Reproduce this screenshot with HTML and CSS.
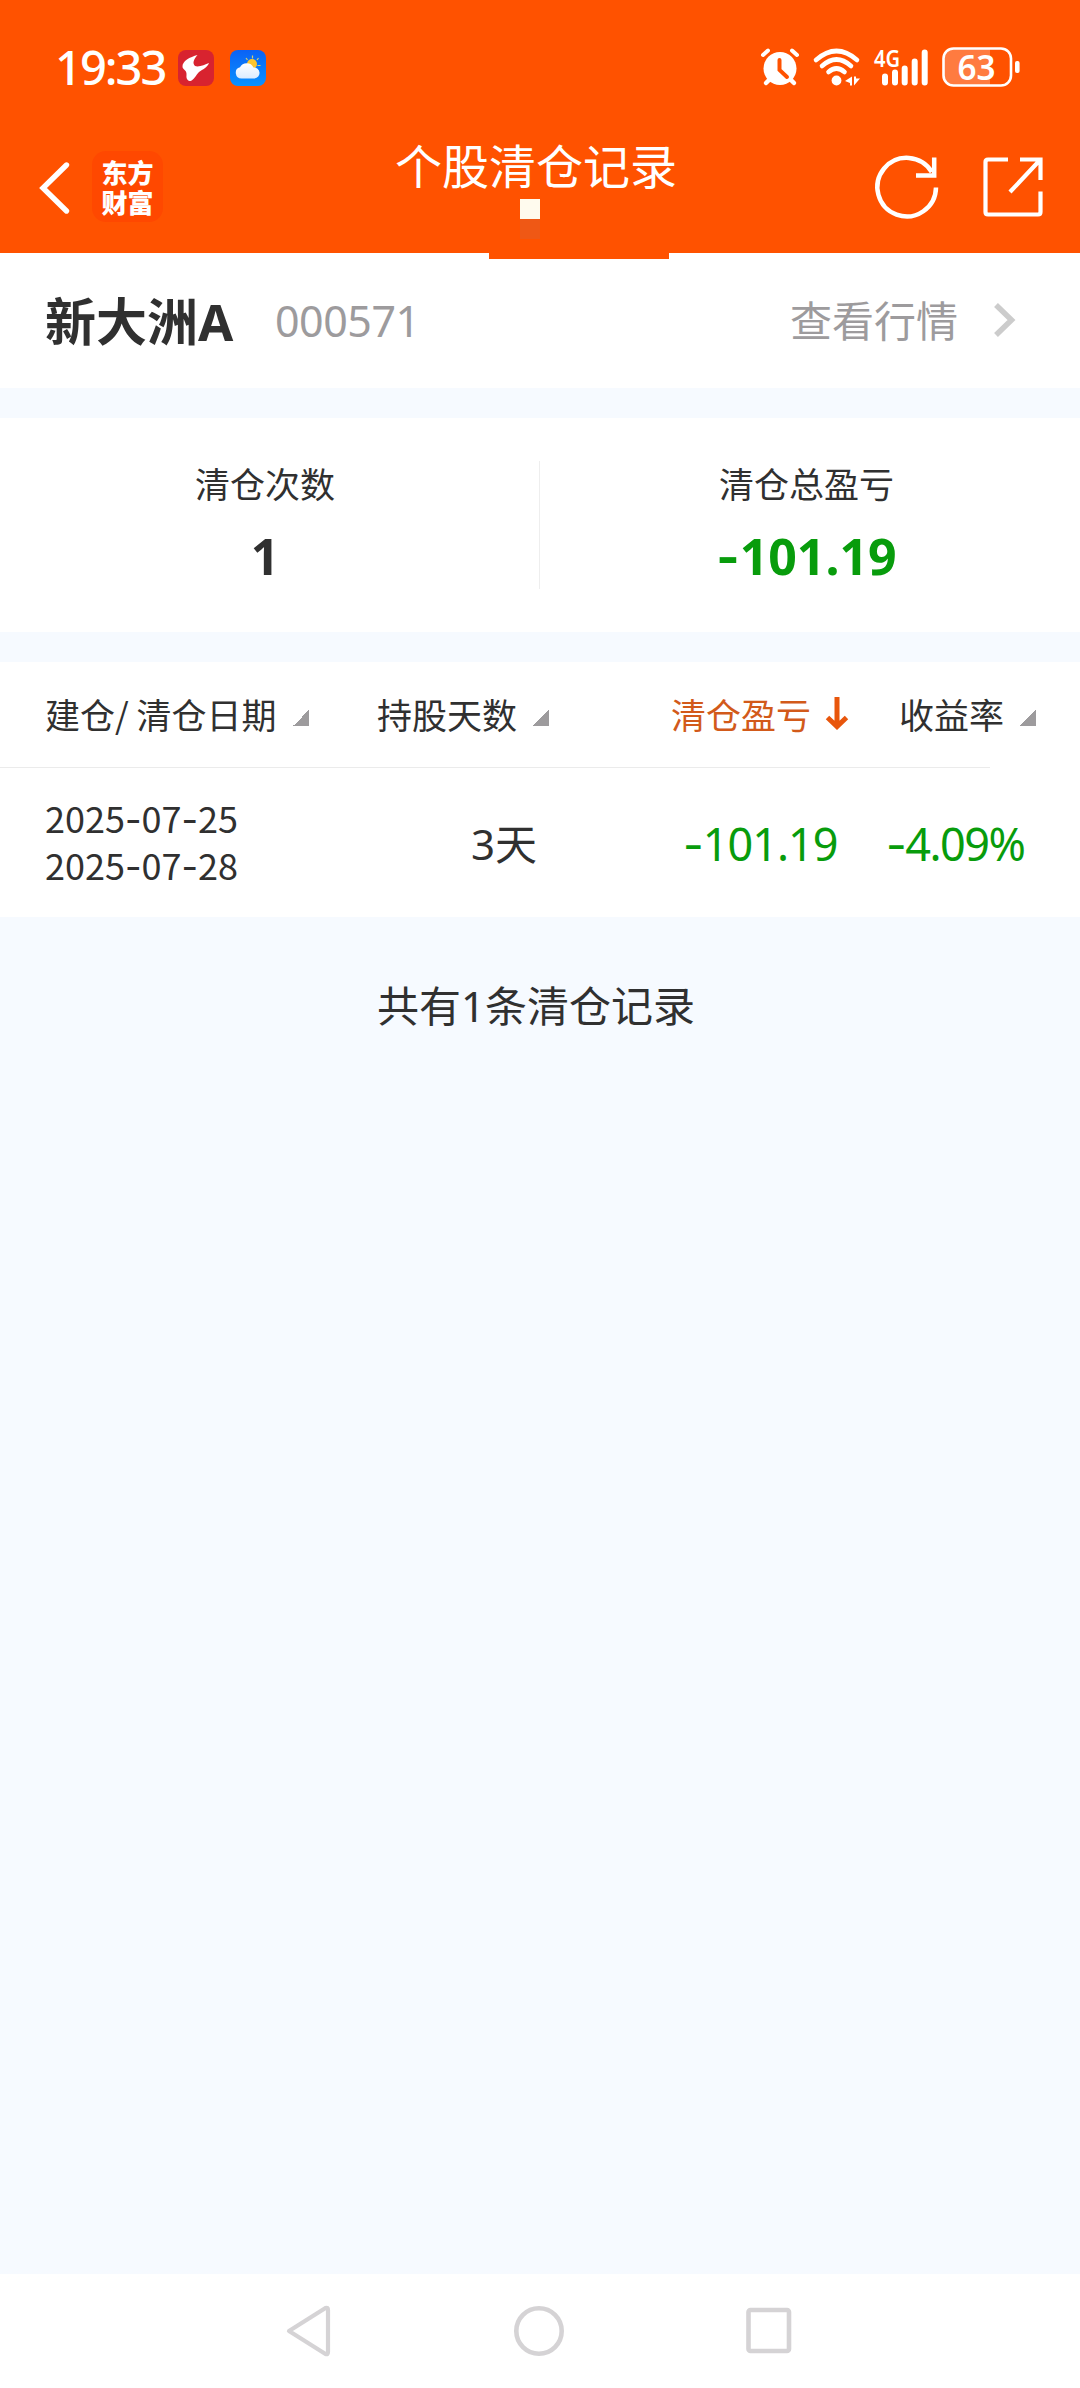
FILE: index.html
```html
<!DOCTYPE html>
<html lang="zh-CN">
<head>
    <meta charset="UTF-8">
    <meta name="viewport" content="width=device-width, initial-scale=1.0">
    <title>个股清仓记录</title>
    <link rel="stylesheet" href="styles.css">
</head>
<body>
    <div class="header">
        <!-- 状态栏 -->
        <div class="status-bar">
            <span class="time">19:33</span>
            <svg class="app-icon" width="36" height="36" viewBox="0 0 36 36">
                <rect width="36" height="36" rx="8" fill="#d8232f"/>
                <path d="M19.500 5C12 7 4 11 4.500 17C5 20 9 20 8.500 25C8 29 10 31 12.500 31C16 30 18 25 21 22C25 19 29 18 31 13C27 14.500 21 17.500 17 16C14 13 16 9 19.500 5Z" fill="#fff"/>
            </svg>
            <svg class="app-icon" width="36" height="36" viewBox="0 0 36 36">
                <defs>
                    <linearGradient id="sky" x1="0" y1="0" x2="0" y2="1">
                        <stop offset="0" stop-color="#0a62f5"/>
                        <stop offset="1" stop-color="#0a92ff"/>
                    </linearGradient>
                    <linearGradient id="cloud" x1="0" y1="0" x2="0" y2="1">
                        <stop offset="0" stop-color="#fff"/>
                        <stop offset="1" stop-color="#dcecff"/>
                    </linearGradient>
                </defs>
                <rect width="36" height="36" rx="8" fill="url(#sky)"/>
                <path d="M22.500 5.500v3M16 8l1.500 2M28.500 8L27 10M27.500 15.500h3M26.500 20l2 1.500" stroke="#d9cf70" stroke-width="1.200"/>
                <circle cx="22" cy="14" r="5" fill="#ffc52e"/>
                <path d="M11.500 28.500A5.700 5.700 0 0 1 10 17.300A7.500 7.500 0 0 1 23.500 17.500A5.500 5.500 0 0 1 24.500 28.500Z" fill="url(#cloud)"/>
            </svg>
            <div class="status-icons">
                <svg class="alarm" width="40" height="40" viewBox="0 0 40 40">
                    <circle cx="20" cy="21.500" r="16.500" fill="#fff"/>
                    <path d="M9 33l-3 3M31 33l3 3" stroke="#fff" stroke-width="4.500" stroke-linecap="round"/>
                    <path d="M3 8l5-4.500M32 3.500L37 8" stroke="#fff" stroke-width="4" stroke-linecap="round"/>
                    <path d="M19.500 13v10l7.500 7" stroke="#ff5200" stroke-width="4" stroke-linecap="round" fill="none"/>
                </svg>
                <svg class="wifi" width="48" height="40" viewBox="0 0 48 40">
                    <g fill="none" stroke="#fff" stroke-width="4.600" stroke-linecap="round">
                        <path d="M3 13Q23.500-5 44 13"/>
                        <path d="M9 19Q23.500 6 38 19"/>
                        <path d="M15.500 25Q23.500 18 31.500 25"/>
                    </g>
                    <circle cx="23.500" cy="33.500" r="4.900" fill="#fff"/>
                    <path d="M39 29.500v9h-2v-2.500l-5-2zM41 29.500v9l6-7h-4v-2z" fill="#fff"/>
                </svg>
                <svg class="signal" width="56" height="40" viewBox="0 0 56 40">
                    <text class="network" x="0" y="20" textLength="26" lengthAdjust="spacingAndGlyphs">4G</text>
                    <path d="M11 29.500v6M21 25.500v10M30.700 21.500v14M40.700 14.500v21M50.700 5.500v30" stroke="#fff" stroke-width="6" stroke-linecap="round"/>
                </svg>
                <svg class="battery" width="80" height="40" viewBox="0 0 80 40">
                    <path d="M11 2H48V38H11Q2 38 2 29V11Q2 2 11 2Z" fill="#ff7b40"/>
                    <rect x="1.500" y="1.500" width="67.500" height="37" rx="10" fill="none" stroke="#fff" stroke-width="2.600"/>
                    <rect x="73" y="14" width="4.600" height="12" rx="2" fill="#fff"/>
                    <text class="level" x="15.500" y="32.500" textLength="38" lengthAdjust="spacingAndGlyphs">63</text>
                </svg>
            </div>
        </div>

        <!-- 标题栏 -->
        <div class="title-bar">
            <svg class="back" width="32" height="54" viewBox="0 0 32 54">
                <path d="M28.500 4L5 27L28.500 50" fill="none" stroke="#fff" stroke-width="5.400" stroke-linecap="round"/>
            </svg>
            <div class="logo">
                <div>东方</div>
                <div>财富</div>
            </div>
            <h1>个股清仓记录</h1>
            <svg class="refresh" width="64" height="64" viewBox="0 0 64 64">
                <path d="M60 32.500A29.300 29.300 0 1 1 55.800 17" fill="none" stroke="#fff" stroke-width="4.500"/>
                <path d="M58.200 2.500V20.500H40" fill="none" stroke="#fff" stroke-width="4.500"/>
            </svg>
            <svg class="share" width="62" height="62" viewBox="0 0 62 62">
                <path d="M26 3.500H6Q3.500 3.500 3.500 6V56Q3.500 58.500 6 58.500H56Q58.500 58.500 58.500 56V35.500M38 3.500H58.500V24M58 4L28 36" fill="none" stroke="#fff" stroke-width="4.200"/>
            </svg>
        </div>
        <div class="pixel"></div>
        <div class="pixel-shade"></div>
        <div class="tab-line"></div>
    </div>

    <!-- 股票名称 -->
    <div class="stock">
        <div class="stock-name">新大洲<span>A</span></div>
        <div class="stock-code">000571</div>
        <div class="stock-link">查看行情</div>
        <svg width="24" height="36" viewBox="0 0 24 36">
            <path d="M3 3L18.500 18L3 33" fill="none" stroke="#ccc" stroke-width="5.500"/>
        </svg>
    </div>

    <!-- 汇总 -->
    <div class="summary">
        <div class="summary-item count">
            <div class="label">清仓次数</div>
            <div class="value">1</div>
        </div>
        <div class="summary-item profit">
            <div class="label">清仓总盈亏</div>
            <div class="value green"><span class="dash">-</span>101.19</div>
        </div>
    </div>

    <!-- 清仓记录列表 -->
    <div class="records">
        <div class="records-head">
            <div class="col-date">建仓/ 清仓日期<i class="sort"></i></div>
            <div class="col-days">持股天数<i class="sort"></i></div>
            <div class="col-profit active">清仓盈亏<svg width="24" height="34" viewBox="0 0 24 34">
                <path d="M12 1V30M2.500 21.500L12 30.500L21.500 21.500" fill="none" stroke="#e8560c" stroke-width="5"/>
            </svg></div>
            <div class="col-rate">收益率<i class="sort"></i></div>
        </div>
        <div class="record">
            <div class="dates">
                <div>2025<span class="dash">-</span>07<span class="dash">-</span>25</div>
                <div>2025<span class="dash">-</span>07<span class="dash">-</span>28</div>
            </div>
            <div class="days"><span>3</span>天</div>
            <div class="amount green"><span class="dash">-</span>101.19</div>
            <div class="rate green"><span class="dash">-</span>4.09%</div>
        </div>
    </div>

    <p class="total">共有<span>1</span>条清仓记录</p>

    <!-- 系统导航 -->
    <div class="nav-bar">
        <svg width="50" height="54" viewBox="0 0 50 54">
            <path d="M5 27L41.500 4Q44 3 44 6V48Q44 51 41.500 50Z" fill="none" stroke="#d5d3d5" stroke-width="4.200" stroke-linejoin="round"/>
        </svg>
        <svg width="54" height="54" viewBox="0 0 54 54">
            <circle cx="27" cy="27" r="22.700" fill="none" stroke="#d5d3d5" stroke-width="4.600"/>
        </svg>
        <svg width="50" height="54" viewBox="0 0 50 54">
            <rect x="4.500" y="6" width="40.500" height="41" rx="2" fill="none" stroke="#d5d3d5" stroke-width="4.600"/>
        </svg>
    </div>
</body>
</html>
```
FILE: styles.css
```css
* {
    box-sizing: border-box;
}
body {
    margin: 0;
    width: 1080px;
    height: 2388px;
    display: flex;
    flex-direction: column;
    background-color: #f6faff;
    color: #303030;
    font-family: "Noto Sans CJK SC", sans-serif;
}
svg {
    display: block;
    flex-shrink: 0;
    overflow: visible;
}
.header {
    position: relative;
    height: 253px;
    background-color: #ff5200;
    color: #fff;
}
.status-bar {
    display: flex;
    align-items: center;
    height: 134px;
    padding-left: 55px;
}
.time {
    width: 123px;
    font-family: "Noto Sans", sans-serif;
    font-size: 47px;
    font-weight: 500;
    letter-spacing: -2px;
    white-space: nowrap;
}
.app-icon {
    margin-top: 2px;
    margin-right: 16px;
}
.status-icons {
    display: flex;
    margin-left: auto;
    padding-right: 58px;
}
.wifi {
    margin-left: 13px;
}
.signal {
    margin-left: 13px;
}
.battery {
    margin-left: 12px;
}
.network {
    font: 600 24px "Noto Sans", sans-serif;
    fill: #fff;
}
.level {
    font: 600 35px "Noto Sans", sans-serif;
    fill: #fff;
}
.title-bar {
    display: flex;
    align-items: flex-start;
}
.back {
    margin: 27px 0 0 38px;
}
.logo {
    width: 71px;
    height: 71px;
    margin: 17px 0 0 22px;
    padding-top: 8px;
    border-radius: 14px;
    background-color: #ff4800;
    font-family: "Liberation Sans", "Noto Sans CJK SC", sans-serif;
    font-size: 26px;
    font-weight: 900;
    text-align: center;
}
.logo div {
    height: 30px;
    line-height: 30px;
}
h1 {
    margin: 0 0 0 232px;
    font-size: 47px;
    font-weight: 400;
    line-height: 60px;
}
.refresh {
    margin: 21px 0 0 199px;
}
.share {
    margin: 22px 0 0 42px;
}
.pixel {
    position: absolute;
    left: 520px;
    top: 199px;
    width: 20px;
    height: 20px;
    background-color: #fffbee;
}
.pixel-shade {
    position: absolute;
    left: 520px;
    top: 219px;
    width: 20px;
    height: 20px;
    background-color: #ef5815;
}
.tab-line {
    position: absolute;
    left: 489px;
    top: 253px;
    width: 180px;
    height: 6px;
    background-color: #ff5200;
}
.stock {
    display: flex;
    align-items: center;
    height: 135px;
    padding: 0 63px 1px 45px;
    background-color: #fff;
}
.stock-name {
    width: 230px;
    padding-bottom: 2px;
    font-size: 51px;
    font-weight: 700;
    white-space: nowrap;
}
.stock-name span {
    font-family: "Noto Sans", sans-serif;
}
.stock-code {
    font-family: "Noto Sans", sans-serif;
    font-size: 43px;
    letter-spacing: -0.5px;
    color: #9d9b9d;
}
.stock-link {
    margin-left: auto;
    margin-right: 35px;
    padding-bottom: 3px;
    font-size: 42px;
    color: #9d9b9d;
}
.summary {
    display: flex;
    height: 214px;
    margin: 30px 0;
    padding: 43px 0;
    background-color: #fff;
}
.summary-item {
    display: flex;
    flex-direction: column;
    align-items: center;
    width: 541px;
}
.count {
    padding-right: 9px;
    border-right: 1px solid #eee;
}
.profit {
    padding-right: 7px;
}
.label {
    font-size: 35px;
    line-height: 44px;
}
.value {
    font-family: "Noto Sans", sans-serif;
    font-size: 50px;
    font-weight: 700;
    line-height: 70px;
    margin-top: 16px;
}
.green {
    color: #089c0c;
}
.dash {
    font-family: "Inter", sans-serif;
    line-height: 1;
}
.records {
    background-color: #fff;
    height: 255px;
}
.records-head {
    display: flex;
    align-items: center;
    width: 990px;
    height: 106px;
    padding-left: 45px;
    padding-bottom: 3px;
    border-bottom: 1px solid #ebebeb;
    font-size: 35px;
    white-space: nowrap;
}
.records-head div {
    display: flex;
    align-items: center;
    flex-shrink: 0;
}
.col-date {
    width: 332px;
}
.col-days {
    width: 294px;
}
.col-profit {
    width: 228px;
}
.active {
    color: #d25a1a;
}
.active svg {
    margin-left: 14px;
    margin-top: -1px;
}
.sort {
    width: 16px;
    height: 16px;
    margin-left: 16px;
    margin-top: 9px;
    background: linear-gradient(135deg, transparent 50%, #9d9b9d 50%);
}
.record {
    display: flex;
    align-items: center;
    height: 149px;
    padding-left: 45px;
    font-size: 42px;
    white-space: nowrap;
}
.dates {
    width: 426px;
    font-size: 36px;
    line-height: 47px;
    padding-bottom: 4px;
}
.days {
    width: 212px;
    padding-bottom: 2px;
}
.days span, .total span {
    font-family: "Noto Sans", sans-serif;
}
.amount, .rate {
    font-family: "Noto Sans", sans-serif;
    font-size: 45px;
    padding-top: 2px;
}
.amount {
    width: 203px;
    letter-spacing: -1px;
}
.rate {
    letter-spacing: -1.5px;
}
.total {
    margin: 56px 0 0 377px;
    font-size: 42px;
    line-height: 62px;
}
.nav-bar {
    display: flex;
    justify-content: space-between;
    height: 114px;
    margin-top: auto;
    padding: 30px 286px 0 284px;
    background-color: #fff;
}
```
